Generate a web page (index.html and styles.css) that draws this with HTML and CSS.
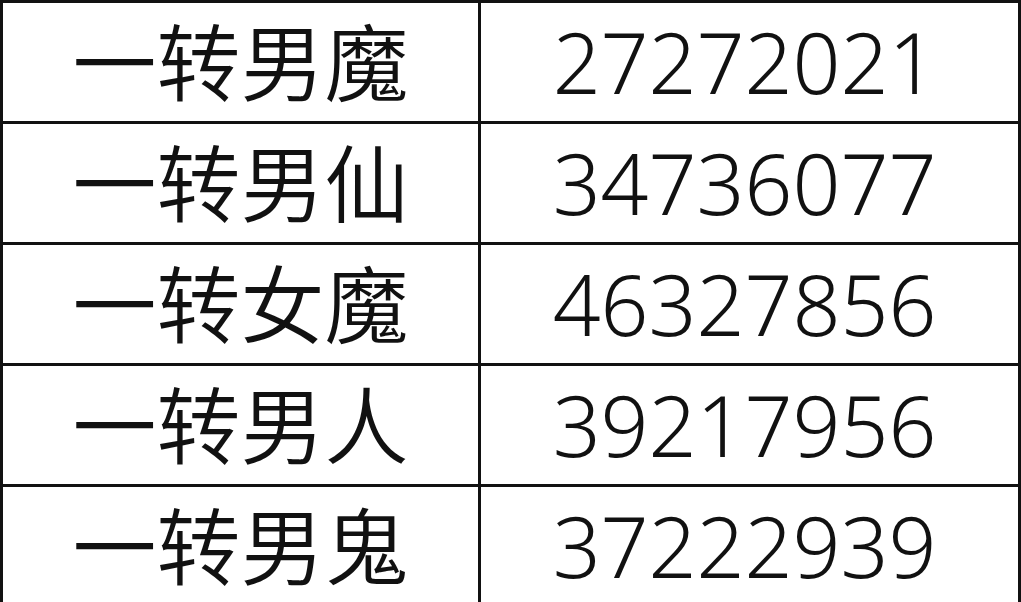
FILE: index.html
```html
<!DOCTYPE html>
<html lang="zh">
<head>
<meta charset="utf-8">
<title>表格</title>
<link rel="stylesheet" href="styles.css">
</head>
<body>
<div class="table">
  <div class="cell name">一转男魔</div><div class="cell num">27272021</div>
  <div class="cell name">一转男仙</div><div class="cell num">34736077</div>
  <div class="cell name">一转女魔</div><div class="cell num">46327856</div>
  <div class="cell name">一转男人</div><div class="cell num">39217956</div>
  <div class="cell name">一转男鬼</div><div class="cell num">37222939</div>
</div>
</body>
</html>
```

FILE: styles.css
```css
html, body {
  margin: 0;
  padding: 0;
  background: #ffffff;
}
body {
  width: 1021px;
  height: 602px;
  overflow: hidden;
}
.table {
  display: grid;
  grid-template-columns: 475px 537px;
  grid-auto-rows: 118px;
  gap: 3px;
  padding: 3px;
  background: #111111;
  width: 1021px;
  box-sizing: border-box;
}
.cell {
  background: #ffffff;
  display: flex;
  align-items: center;
  justify-content: center;
  font-family: "Noto Sans", "Noto Sans CJK SC", sans-serif;
  font-size: 84px;
  font-weight: 350;
  line-height: 1;
  color: #111111;
}
.name {
  padding-top: 2px;
}
.num {
  padding-right: 10px;
}
```
